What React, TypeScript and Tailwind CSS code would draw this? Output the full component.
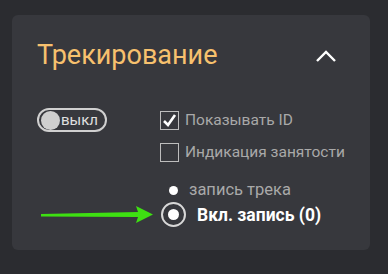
import React from 'react';

export default function App() {
    return (
        <div className="w-[388px] h-[274px] bg-[#2b2c30] pt-[15px] pl-[12px] font-['Roboto',sans-serif]">
            <div className="relative w-[358px] h-[235px] rounded-md bg-[#37383d] pl-[25px] pt-[23px]">
                <div className="flex items-center justify-between pr-[33px]">
                    <h2 className="text-[27px] leading-[34px] text-[#f7c16e]">Трекирование</h2>
                    <svg width="22" height="14" viewBox="0 0 22 14" className="mt-[2px]">
                        <path d="M2 12 L11 3 L20 12" fill="none" stroke="#ffffff" strokeWidth="2.4" />
                    </svg>
                </div>

                <div className="flex mt-[36px]">
                    <div className="w-[123px]">
                        <div className="flex items-center w-[70px] h-[24px] rounded-full border-2 border-[#d0d0d0] pl-[2px] gap-[1px]">
                            <div className="w-[19px] h-[19px] rounded-full bg-[#cfcfcf]" />
                            <span className="text-[15px] leading-[18px] text-[#e0e0e0]">выкл</span>
                        </div>
                    </div>
                    <div className="flex flex-col gap-[13px] pt-[3px]">
                        <label className="flex items-center gap-[6px]">
                            <span className="flex items-center justify-center w-[19px] h-[19px] border border-[#bdbdbd]">
                                <svg width="15" height="15" viewBox="0 0 15 15">
                                    <path d="M2 8 L6 12 L13 2" fill="none" stroke="#ffffff" strokeWidth="2.6" />
                                </svg>
                            </span>
                            <span className="text-[15.5px] leading-[19px] text-[#a9a9a9]">Показывать ID</span>
                        </label>
                        <label className="flex items-center gap-[6px]">
                            <span className="w-[19px] h-[19px] border border-[#bdbdbd]" />
                            <span className="text-[15.5px] leading-[19px] text-[#a9a9a9]">Индикация занятости</span>
                        </label>
                    </div>
                </div>

                <div className="flex flex-col ml-[124px] mt-[19px]">
                    <div className="flex items-center h-[18px]">
                        <span className="ml-[8px] w-[9px] h-[9px] rounded-full bg-white" />
                        <span className="ml-[11px] text-[16.5px] leading-[18px] text-[#a9a9a9]">запись трека</span>
                    </div>
                    <div className="flex items-center mt-[3px]">
                        <span className="flex items-center justify-center w-[25px] h-[25px] rounded-full border-2 border-[#d8d8d8]">
                            <span className="w-[11px] h-[11px] rounded-full bg-white" />
                        </span>
                        <span className="ml-[11px] text-[17.5px] font-bold leading-[22px] text-white">Вкл. запись (0)</span>
                    </div>
                </div>

                <svg className="absolute left-[28px] top-[190px]" width="116" height="20" viewBox="0 0 116 20">
                    <path d="M1 9 L98 7 L96 1 L113 9.5 L96 18 L98 12 L1 11.5 Z" fill="#3ee012" />
                </svg>
            </div>
        </div>
    );
}
